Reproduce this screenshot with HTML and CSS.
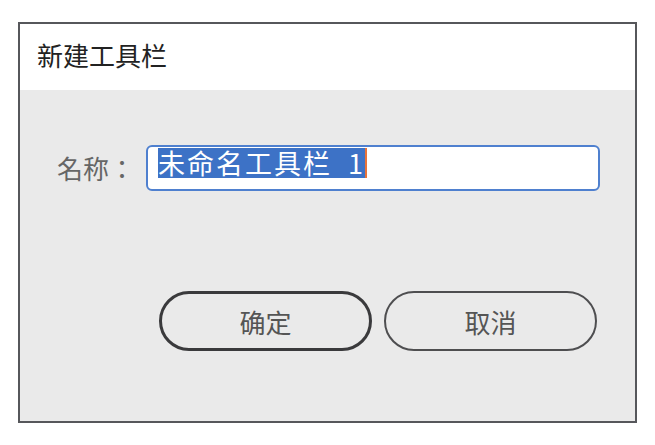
FILE: index.html
```html
<!DOCTYPE html>
<html lang="zh-CN">
<head>
    <meta charset="UTF-8">
    <title>新建工具栏</title>
    <link rel="stylesheet" href="styles.css">
</head>
<body>
    <div class="dialog">
        <div class="dialog-title">新建工具栏</div>

        <div class="dialog-body">
            <!-- 名称输入 -->
            <div class="form-row">
                <label class="form-label" lang="zh-TW">名称：</label>
                <div class="name-input">
                    <span class="selected">未命名工具栏  1</span><span class="caret"></span>
                </div>
            </div>

            <div class="buttons">
                <button class="btn btn-default">确定</button>
                <button class="btn">取消</button>
            </div>
        </div>
    </div>
</body>
</html>
```

FILE: styles.css
```css
* {
    margin: 0;
    padding: 0;
    box-sizing: border-box;
}

body {
    background-color: #ffffff;
    font-family: "Noto Sans CJK SC", "Liberation Sans", sans-serif;
    padding: 22px 0 0 18px;
}

.dialog {
    width: 619px;
    height: 401px;
    border: 2px solid #56575b;
    background-color: #eaeaea;
    display: flex;
    flex-direction: column;
}

.dialog-title {
    background-color: #ffffff;
    height: 66px;
    padding: 16px 0 0 17px;
    font-size: 26px;
    line-height: 30px;
    color: #222222;
}

.dialog-body {
    flex: 1;
    padding: 55px 0 0 0;
}

.form-row {
    display: flex;
    align-items: center;
    padding-left: 37px;
}

/* 繁体字体的全角冒号居中 */
.form-label {
    font-family: "Noto Sans CJK TC", "Noto Sans CJK SC", sans-serif;
    font-size: 26px;
    line-height: 30px;
    color: #666666;
    width: 89px;
    padding-top: 0;
}

.name-input {
    width: 454px;
    height: 46px;
    border: 2px solid #4f80cf;
    border-radius: 6px;
    background-color: #ffffff;
    padding: 1px 0 0 10px;
    display: flex;
    align-items: flex-start;
}

.selected {
    background-color: #3d72c6;
    color: #ffffff;
    font-size: 27px;
    line-height: 30px;
    letter-spacing: 2px;
    white-space: pre;
}

.caret {
    width: 2px;
    height: 30px;
    background-color: #e8733a;
}

.buttons {
    display: flex;
    gap: 12px;
    padding: 100px 0 0 139px;
}

.btn {
    width: 213px;
    height: 60px;
    border: 2px solid #4e4e50;
    border-radius: 30px;
    background-color: #eaeaea;
    font-family: "Noto Sans CJK SC", "Liberation Sans", sans-serif;
    font-size: 26px;
    color: #555555;
}

.btn-default {
    border: 3px solid #3a3a3c;
}
```
